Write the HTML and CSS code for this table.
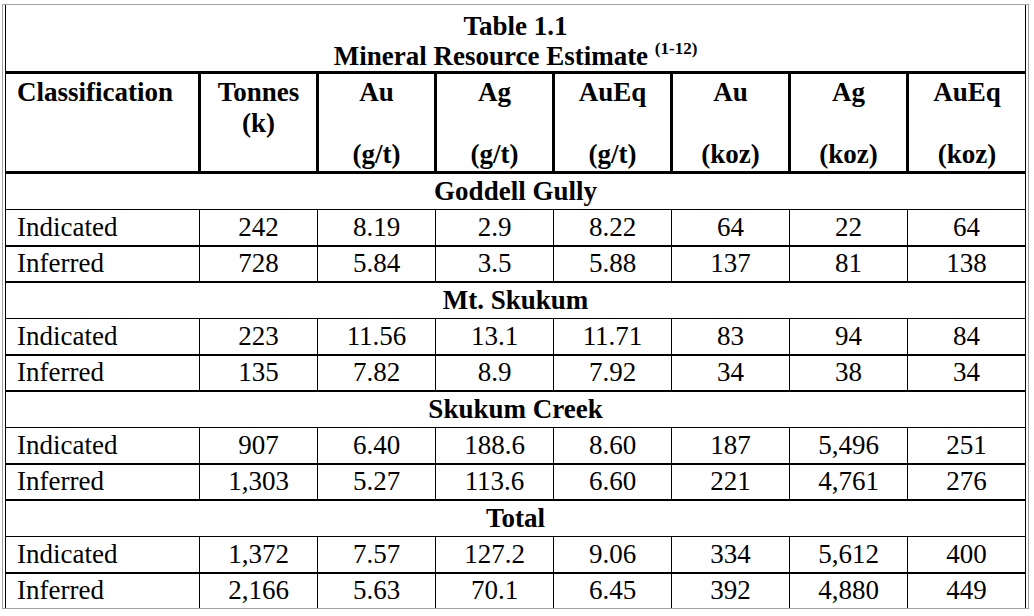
FILE: index.html
```html
<!DOCTYPE html>
<html>
<head>
<meta charset="utf-8">
<title>Table 1.1 Mineral Resource Estimate</title>
<link rel="stylesheet" href="styles.css">
</head>
<body>
<div class="frame">
<table class="res">
<colgroup>
<col class="c-first"><col class="c"><col class="c"><col class="c"><col class="c"><col class="c"><col class="c"><col class="c">
</colgroup>
<tr class="title-row"><td colspan="8">Table 1.1<br>Mineral Resource Estimate <span class="sup">(1-12)</span></td></tr>
<tr class="head-row">
<th class="first">Classification</th>
<th>Tonnes<br>(k)</th>
<th>Au<br><br>(g/t)</th>
<th>Ag<br><br>(g/t)</th>
<th>AuEq<br><br>(g/t)</th>
<th>Au<br><br>(koz)</th>
<th>Ag<br><br>(koz)</th>
<th>AuEq<br><br>(koz)</th>
</tr>
<tr class="sec"><td colspan="8">Goddell Gully</td></tr>
<tr class="d"><td class="first">Indicated</td><td>242</td><td>8.19</td><td>2.9</td><td>8.22</td><td>64</td><td>22</td><td>64</td></tr>
<tr class="d end"><td class="first">Inferred</td><td>728</td><td>5.84</td><td>3.5</td><td>5.88</td><td>137</td><td>81</td><td>138</td></tr>
<tr class="sec"><td colspan="8">Mt. Skukum</td></tr>
<tr class="d"><td class="first">Indicated</td><td>223</td><td>11.56</td><td>13.1</td><td>11.71</td><td>83</td><td>94</td><td>84</td></tr>
<tr class="d end"><td class="first">Inferred</td><td>135</td><td>7.82</td><td>8.9</td><td>7.92</td><td>34</td><td>38</td><td>34</td></tr>
<tr class="sec"><td colspan="8">Skukum Creek</td></tr>
<tr class="d"><td class="first">Indicated</td><td>907</td><td>6.40</td><td>188.6</td><td>8.60</td><td>187</td><td>5,496</td><td>251</td></tr>
<tr class="d end"><td class="first">Inferred</td><td>1,303</td><td>5.27</td><td>113.6</td><td>6.60</td><td>221</td><td>4,761</td><td>276</td></tr>
<tr class="sec"><td colspan="8">Total</td></tr>
<tr class="d"><td class="first">Indicated</td><td>1,372</td><td>7.57</td><td>127.2</td><td>9.06</td><td>334</td><td>5,612</td><td>400</td></tr>
<tr class="d last"><td class="first">Inferred</td><td>2,166</td><td>5.63</td><td>70.1</td><td>6.45</td><td>392</td><td>4,880</td><td>449</td></tr>
</table>
</div>
</body>
</html>
```

FILE: styles.css
```css
html, body {
  margin: 0;
  padding: 0;
  background: #ffffff;
}

body {
  font-family: "Liberation Serif", "Times New Roman", serif;
  color: #000000;
}

.frame {
  margin: 4px 0 0 2px;
  width: 1021px;
  padding: 0 2px 0 2px;
  border: 1px solid #a3a3a3;
}

.res {
  width: 1021px;
  table-layout: fixed;
  border-collapse: collapse;
  font-size: 27px;
  line-height: 31px;
}

.c-first { width: 194px; }
.c { width: 118px; }

.res td, .res th {
  padding: 0;
  text-align: center;
  vertical-align: middle;
  border-left: 1px solid #000;
  border-right: 1px solid #000;
  white-space: nowrap;
}

.res .first {
  text-align: left;
  padding-left: 11px;
}

.title-row td {
  height: 60px;
  font-weight: bold;
  line-height: 30px;
  vertical-align: top;
  padding-top: 6px;
  border-bottom: 3px solid #000;
}

.sup {
  font-size: 17px;
  line-height: 0;
  vertical-align: 11px;
}

.head-row th {
  height: 94px;
  font-weight: bold;
  vertical-align: top;
  padding-top: 3px;
  border-left: 3px solid #000;
  border-right: 3px solid #000;
  border-bottom: 3px solid #000;
}

.head-row th.first {
  border-left: 1px solid #000;
}

.head-row th:last-child {
  border-right: 1px solid #000;
}

.sec td {
  height: 35px;
  font-weight: bold;
  border-bottom: 1px solid #000;
}

.d td {
  height: 34.5px;
  border-bottom: 2px solid #000;
}

.d.last td {
  border-bottom: none;
}
```
